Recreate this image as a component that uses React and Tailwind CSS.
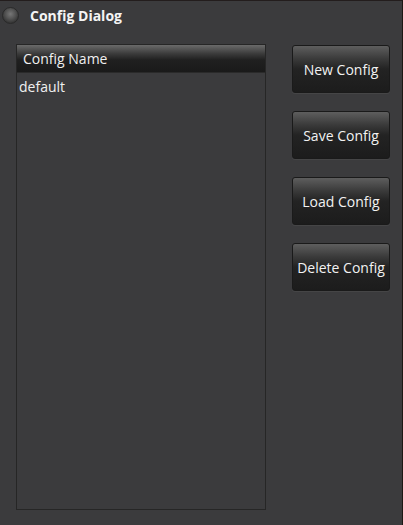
export default function App() {
  const btn =
    "w-[98px] h-[48px] rounded-[3px] border border-[#1a1a1a] bg-[linear-gradient(to_bottom,#5e5e5e_0%,#3a3a3a_28%,#232323_50%,#1c1c1c_100%)] text-[14px] text-[#f2f2f2] flex items-center justify-center shadow-[0_1px_0_rgba(255,255,255,0.05)]";
  return (
    <div className="w-[403px] h-[525px] bg-[#3b3b3d] border-t border-t-[#231d1d] border-r border-r-[#1c1814] flex flex-col" style={{ fontFamily: '"Open Sans", "DejaVu Sans", sans-serif' }}>
      <div className="h-[30px] flex items-center pl-[2px] pb-[1px]">
        <div className="w-[17px] h-[17px] rounded-full bg-[radial-gradient(circle_at_50%_40%,#767676_0%,#555555_40%,#363636_75%,#282828_100%)] border border-[#2a2a2a]" />
        <span className="ml-[11px] text-[14px] font-bold text-[#f4f4f4]">Config Dialog</span>
      </div>
      <div className="flex pt-[13px] pl-[16px]">
        <div className="w-[250px] h-[466px] border border-[#262626] flex flex-col">
          <div className="h-[28px] bg-[linear-gradient(to_bottom,#6a6a6a_0%,#3e3e3e_30%,#202020_55%,#1a1a1a_100%)] border-b border-[#2a2a2a] flex items-center pl-[6px] text-[14px] text-[#f0f0f0]">
            Config Name
          </div>
          <div className="h-[26px] flex items-center pl-[2px] text-[14px] text-[#f0f0f0]">default</div>
        </div>
        <div className="ml-[26px] mt-[1px] flex flex-col gap-[18px]">
          <div className={btn}>New Config</div>
          <div className={btn}>Save Config</div>
          <div className={btn}>Load Config</div>
          <div className={btn}>Delete Config</div>
        </div>
      </div>
    </div>
  );
}
